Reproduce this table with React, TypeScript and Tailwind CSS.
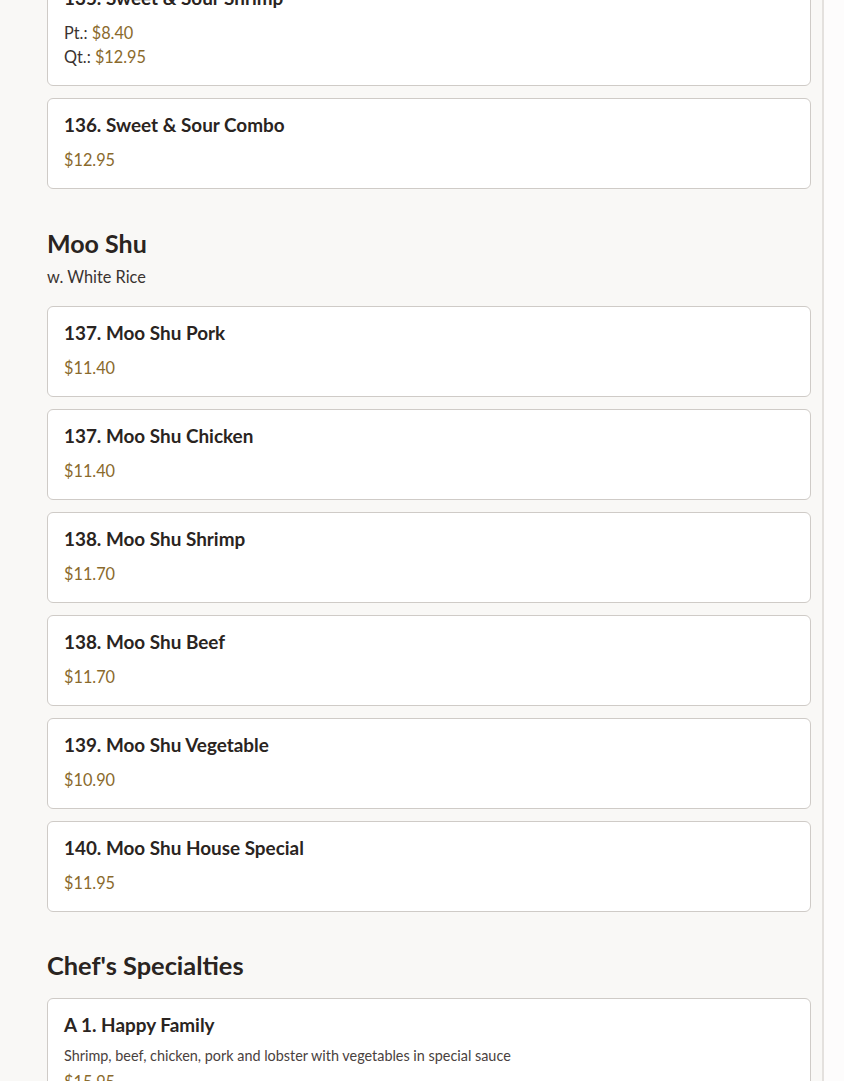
const font = { fontFamily: "Lato, 'Noto Sans', sans-serif" };

type Item = { name: string; prices?: { label: string; value: string }[]; price?: string; desc?: string };

const sweetSour: Item[] = [
  {
    name: "135. Sweet & Sour Shrimp",
    prices: [
      { label: "Pt.:", value: "$8.40" },
      { label: "Qt.:", value: "$12.95" },
    ],
  },
  { name: "136. Sweet & Sour Combo", price: "$12.95" },
];

const mooShu: Item[] = [
  { name: "137. Moo Shu Pork", price: "$11.40" },
  { name: "137. Moo Shu Chicken", price: "$11.40" },
  { name: "138. Moo Shu Shrimp", price: "$11.70" },
  { name: "138. Moo Shu Beef", price: "$11.70" },
  { name: "139. Moo Shu Vegetable", price: "$10.90" },
  { name: "140. Moo Shu House Special", price: "$11.95" },
];

const chef: Item[] = [
  {
    name: "A 1. Happy Family",
    desc: "Shrimp, beef, chicken, pork and lobster with vegetables in special sauce",
    price: "$15.95",
  },
];

function Card({ item }: { item: Item }) {
  return (
    <div className="rounded-md border border-[#cfcbc7] bg-white px-4 pt-[15px] pb-4">
      <h3 className="text-[18.9px] font-bold leading-[21px] text-[#2a2421]">{item.name}</h3>
      {item.desc && <p className="mt-[11px] text-[14.4px] leading-5 text-[#4a423e]">{item.desc}</p>}
      {item.prices ? (
        <div className="mt-[13px]">
          {item.prices.map((p) => (
            <p key={p.label} className="text-[16.3px] leading-6 text-[#3a3330]">
              {p.label} <span className="text-[#8a6a2c]">{p.value}</span>
            </p>
          ))}
        </div>
      ) : (
        <p className={`${item.desc ? "mt-1" : "mt-[13px]"} text-[16.3px] leading-6 text-[#8a6a2c]`}>{item.price}</p>
      )}
    </div>
  );
}

export default function App() {
  return (
    <div className="flex h-[1081px] overflow-hidden bg-[#fbfaf9]" style={font}>
      <div className="w-[824px] shrink-0 border-r-2 border-[#e4e1de] bg-[#f9f8f6] pl-[47px] pr-[11px]">
        <div className="mt-[-29px] flex flex-col gap-3">
          {sweetSour.map((it) => (
            <Card key={it.name} item={it} />
          ))}
        </div>

        <div className="mt-[38px]">
          <h2 className="text-[25px] font-bold leading-8 text-[#2a2421]">Moo Shu</h2>
          <p className="mt-[7px] text-[16.3px] leading-[22px] text-[#3a3330]">w. White Rice</p>
          <div className="mt-[18px] flex flex-col gap-3">
            {mooShu.map((it) => (
              <Card key={it.name} item={it} />
            ))}
          </div>
        </div>

        <div className="mt-[37px]">
          <h2 className="text-[25.4px] font-bold leading-8 text-[#2a2421]">Chef's Specialties</h2>
          <div className="mt-[17px] flex flex-col gap-3">
            {chef.map((it) => (
              <Card key={it.name} item={it} />
            ))}
          </div>
        </div>
      </div>
      <div className="flex-1 bg-[#fdfcfc]" />
    </div>
  );
}
